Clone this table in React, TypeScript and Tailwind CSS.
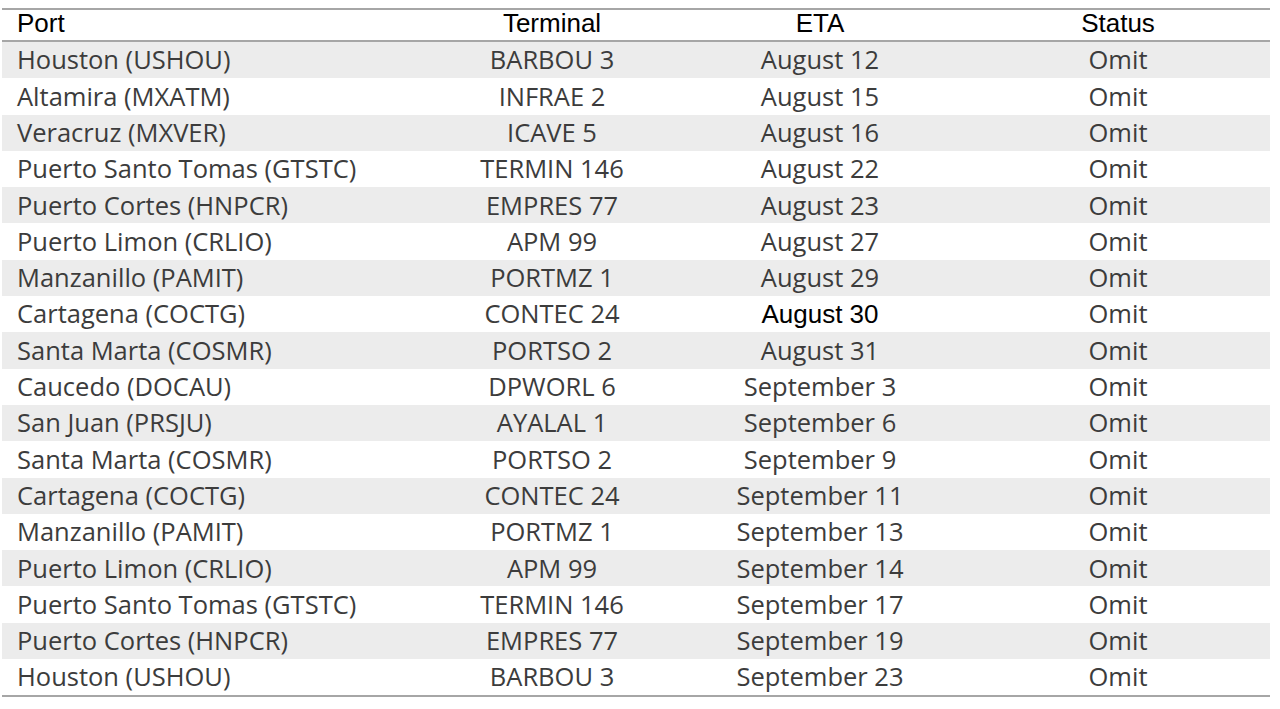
const rows = [
  { port: "Houston (USHOU)", terminal: "BARBOU 3", eta: "August 12" },
  { port: "Altamira (MXATM)", terminal: "INFRAE 2", eta: "August 15" },
  { port: "Veracruz (MXVER)", terminal: "ICAVE 5", eta: "August 16" },
  { port: "Puerto Santo Tomas (GTSTC)", terminal: "TERMIN 146", eta: "August 22" },
  { port: "Puerto Cortes (HNPCR)", terminal: "EMPRES 77", eta: "August 23" },
  { port: "Puerto Limon (CRLIO)", terminal: "APM 99", eta: "August 27" },
  { port: "Manzanillo (PAMIT)", terminal: "PORTMZ 1", eta: "August 29" },
  { port: "Cartagena (COCTG)", terminal: "CONTEC 24", eta: "August 30", arial: true },
  { port: "Santa Marta (COSMR)", terminal: "PORTSO 2", eta: "August 31" },
  { port: "Caucedo (DOCAU)", terminal: "DPWORL 6", eta: "September 3" },
  { port: "San Juan (PRSJU)", terminal: "AYALAL 1", eta: "September 6" },
  { port: "Santa Marta (COSMR)", terminal: "PORTSO 2", eta: "September 9" },
  { port: "Cartagena (COCTG)", terminal: "CONTEC 24", eta: "September 11" },
  { port: "Manzanillo (PAMIT)", terminal: "PORTMZ 1", eta: "September 13" },
  { port: "Puerto Limon (CRLIO)", terminal: "APM 99", eta: "September 14" },
  { port: "Puerto Santo Tomas (GTSTC)", terminal: "TERMIN 146", eta: "September 17" },
  { port: "Puerto Cortes (HNPCR)", terminal: "EMPRES 77", eta: "September 19" },
  { port: "Houston (USHOU)", terminal: "BARBOU 3", eta: "September 23" },
]

const cols = "grid grid-cols-[428px_244px_292px_304px]"

export default function App() {
  return (
    <div className="w-[1280px] h-[709px] bg-white pt-2 pl-[2px]">
      <div className="w-[1268px] border-t-2 border-b-2 border-[#a6a6a6]">
        {/* Header */}
        <div
          className={`${cols} h-[32px] items-center pb-[7px] border-b-2 border-[#a6a6a6] text-[26px] leading-none text-black font-['Liberation_Sans',Arial,sans-serif]`}
        >
          <div className="pl-[15px]">Port</div>
          <div className="text-center">Terminal</div>
          <div className="text-center">ETA</div>
          <div className="text-center">Status</div>
        </div>

        {/* Rows */}
        {rows.map((r, i) => (
          <div
            key={i}
            className={`${cols} h-[36.3px] items-center text-[25.5px] leading-none text-[#3c3c3c] font-['Open_Sans',sans-serif] ${
              i % 2 === 0 ? "bg-[#ececec]" : "bg-white"
            }`}
          >
            <div className="pl-[15px] whitespace-nowrap">{r.port}</div>
            <div className="text-center whitespace-nowrap">{r.terminal}</div>
            <div
              className={`text-center whitespace-nowrap ${
                r.arial ? "font-['Liberation_Sans',Arial,sans-serif] text-[26px] text-black" : ""
              }`}
            >
              {r.eta}
            </div>
            <div className="text-center">Omit</div>
          </div>
        ))}
      </div>
    </div>
  )
}
